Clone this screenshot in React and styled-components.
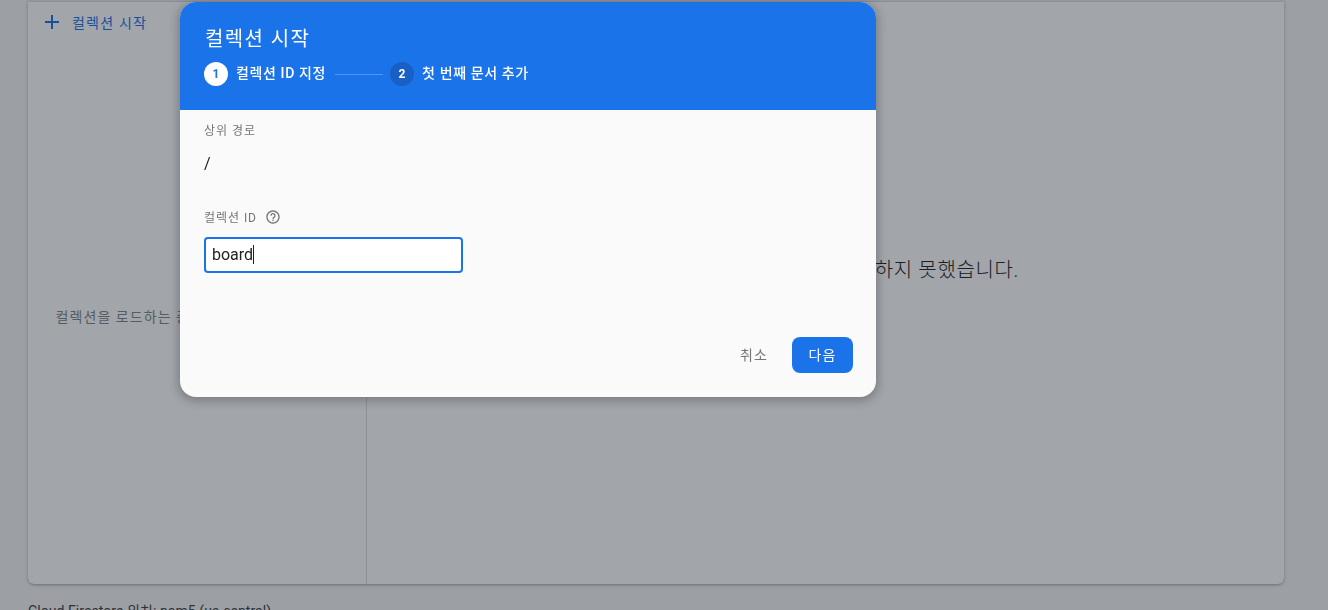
import React from "react";
import styled, { createGlobalStyle } from "styled-components";

const FONT = `Roboto, "Noto Sans CJK KR", sans-serif`;

const GlobalStyle = createGlobalStyle`
  html, body {
    margin: 0;
    height: 100%;
    overflow: hidden;
    background: #f6f6f6;
    font-family: ${FONT};
  }
`;

const Page = styled.div`
  height: 610px;
  overflow: hidden;
  box-sizing: border-box;
  padding: 1px 44px 0 28px;
`;

const Card = styled.div`
  display: flex;
  height: 583px;
  background: #fff;
  border-top: 1px solid #dadce0;
  box-sizing: border-box;
  border-radius: 0 0 6px 6px;
  box-shadow: 0 1px 2px rgba(60, 64, 67, 0.3), 0 1px 4px 1px rgba(60, 64, 67, 0.12);
`;

const LeftColumn = styled.div`
  width: 338px;
  flex: none;
  display: flex;
  flex-direction: column;
  border-right: 1px solid #dadce0;
  box-sizing: content-box;
`;

const AddRow = styled.div`
  height: 40px;
  padding: 0 0 4px 12px;
  display: flex;
  align-items: center;
  gap: 8px;
  color: #1a73e8;
  font-size: 14px;
  letter-spacing: 1.2px;
`;

const LoadingText = styled.div`
  flex: 1;
  padding-top: 2px;
  display: flex;
  align-items: center;
  justify-content: center;
  white-space: nowrap;
  color: #80868b;
  font-size: 14px;
  letter-spacing: 1.05px;
`;

const RightColumn = styled.div`
  flex: 1;
  display: flex;
  align-items: center;
  justify-content: center;
  padding: 0 6px 50px 0;
  color: #202124;
  font-size: 20px;
  font-weight: 300;
  letter-spacing: 0.65px;
`;

const Footer = styled.div`
  margin-top: 18px;
  color: #3c4043;
  font-size: 14px;
  line-height: 18px;
  letter-spacing: 0.07px;
`;

const Scrim = styled.div`
  position: fixed;
  inset: 0;
  background: rgba(22, 30, 40, 0.4);
`;

const Modal = styled.div`
  position: fixed;
  left: 180px;
  top: 2px;
  width: 696px;
  height: 395px;
  display: flex;
  flex-direction: column;
  border-radius: 16px;
  overflow: hidden;
  background: #fafafa;
  box-shadow: 0 2px 10px 2px rgba(32, 33, 36, 0.3);
`;

const ModalHeader = styled.div`
  height: 108px;
  flex: none;
  box-sizing: border-box;
  padding: 22px 24px 0;
  background: #1a73e8;
  color: #fff;
`;

const Title = styled.div`
  font-size: 20px;
  line-height: 26px;
  letter-spacing: 1.4px;
  padding: 2px 0 0 1px;
`;

const Stepper = styled.div`
  display: flex;
  align-items: center;
  margin-top: 10px;
`;

const StepDot = styled.div`
  width: 24px;
  height: 24px;
  border-radius: 50%;
  display: flex;
  align-items: center;
  justify-content: center;
  font-size: 12px;
  font-weight: 700;
  background: ${(p) => (p.$active ? "#fff" : "#1a5fc4")};
  color: ${(p) => (p.$active ? "#1a73e8" : "#fff")};
`;

const StepLabel = styled.div`
  margin-left: 8px;
  font-size: 14px;
  font-weight: 500;
  line-height: 20px;
  letter-spacing: 0.62px;
  position: relative;
  top: -1px;
`;

const StepLine = styled.div`
  width: 48px;
  height: 1px;
  margin: 0 7px 0 9px;
  background: rgba(255, 255, 255, 0.25);
`;

const ModalBody = styled.div`
  flex: 1;
  display: flex;
  flex-direction: column;
  padding: 11px 23px 0 24px;
`;

const FieldLabel = styled.div`
  display: flex;
  align-items: center;
  gap: 8px;
  height: 17px;
  color: #757575;
  font-size: 12px;
  letter-spacing: 0.95px;
`;

const PathValue = styled.div`
  margin-top: 15px;
  height: 22px;
  line-height: 22px;
  color: #202124;
  font-size: 16px;
`;

const IdLabel = styled(FieldLabel)`
  margin-top: 33px;
`;

const Field = styled.div`
  margin-top: 12px;
  width: 259px;
  height: 36px;
  box-sizing: border-box;
  display: flex;
  align-items: center;
  padding: 0 6px 2px;
  background: #fff;
  border: 2px solid #1a73e8;
  border-radius: 4px;
  color: #202124;
  font-size: 16px;
`;

const Caret = styled.span`
  width: 1px;
  height: 19px;
  background: #202124;
`;

const Actions = styled.div`
  display: flex;
  justify-content: flex-end;
  align-items: center;
  gap: 11px;
  margin-top: 64px;
`;

const Button = styled.div`
  height: 36px;
  box-sizing: border-box;
  padding-bottom: 2px;
  display: flex;
  align-items: center;
  justify-content: center;
  font-size: 14px;
  letter-spacing: 1px;
  border-radius: 8px;
  width: ${(p) => (p.$primary ? "61px" : "54px")};
  background: ${(p) => (p.$primary ? "#1a73e8" : "transparent")};
  color: ${(p) => (p.$primary ? "#fff" : "#757575")};
`;

const PlusIcon = () => (
  <svg width="24" height="24" viewBox="0 0 24 24" fill="currentColor">
    <path d="M19 13h-6v6h-2v-6H5v-2h6V5h2v6h6v2z" />
  </svg>
);

const HelpIcon = () => (
  <svg width="16" height="16" viewBox="0 0 24 24" fill="currentColor">
    <path d="M11 18h2v-2h-2v2zm1-16C6.48 2 2 6.48 2 12s4.48 10 10 10 10-4.48 10-10S17.52 2 12 2zm0 18c-4.41 0-8-3.59-8-8s3.59-8 8-8 8 3.59 8 8-3.59 8-8 8zm0-14c-2.21 0-4 1.79-4 4h2c0-1.1.9-2 2-2s2 .9 2 2c0 2-3 1.75-3 5h2c0-2.25 3-2.5 3-5 0-2.21-1.79-4-4-4z" />
  </svg>
);

export default function App() {
  return (
    <>
      <GlobalStyle />
      <Page>
        <Card>
          <LeftColumn>
            <AddRow>
              <PlusIcon />
              컬렉션 시작
            </AddRow>
            <LoadingText>컬렉션을 로드하는 중에 오류가 발생했습니다</LoadingText>
          </LeftColumn>
          <RightColumn>Cloud Firestore 문서를 로드하지 못했습니다.</RightColumn>
        </Card>
        <Footer>Cloud Firestore 위치: nam5 (us-central)</Footer>
      </Page>
      <Scrim />
      <Modal>
        <ModalHeader>
          <Title>컬렉션 시작</Title>
          <Stepper>
            <StepDot $active>1</StepDot>
            <StepLabel>컬렉션 ID 지정</StepLabel>
            <StepLine />
            <StepDot>2</StepDot>
            <StepLabel>첫 번째 문서 추가</StepLabel>
          </Stepper>
        </ModalHeader>
        <ModalBody>
          <FieldLabel>상위 경로</FieldLabel>
          <PathValue>/</PathValue>
          <IdLabel>
            컬렉션 ID
            <HelpIcon />
          </IdLabel>
          <Field>
            board
            <Caret />
          </Field>
          <Actions>
            <Button>취소</Button>
            <Button $primary>다음</Button>
          </Actions>
        </ModalBody>
      </Modal>
    </>
  );
}
